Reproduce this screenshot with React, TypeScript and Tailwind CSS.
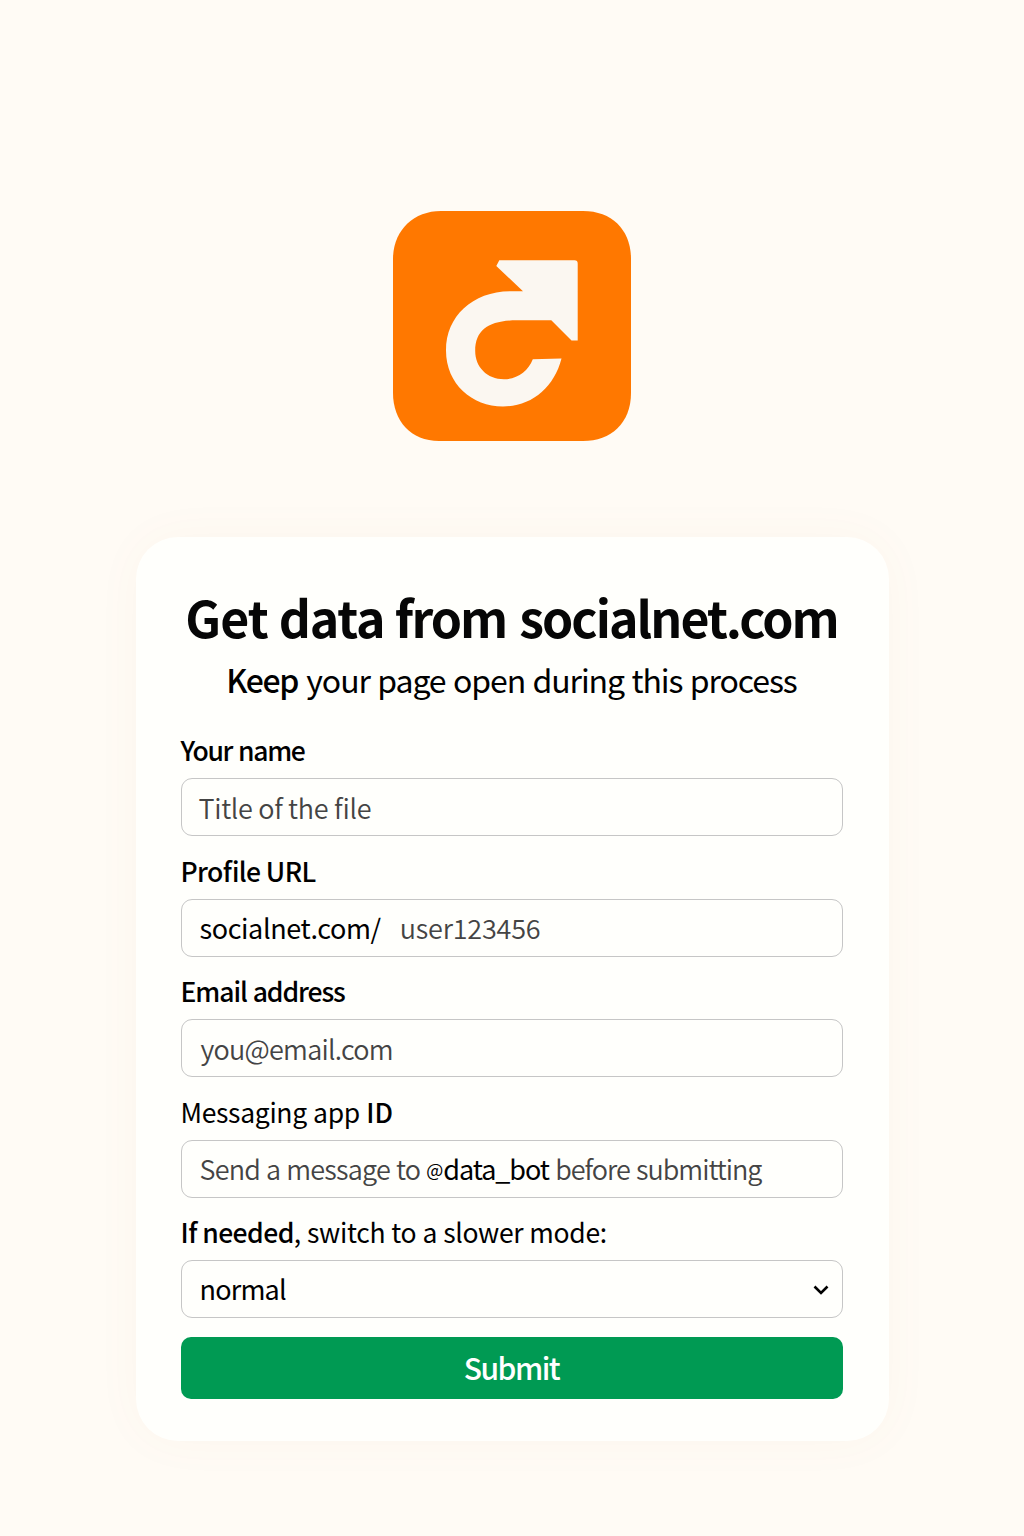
import type { ReactNode } from "react";

function Logo() {
  return (
    <svg width="238" height="230" viewBox="0 0 238 230" className="block" role="img" aria-label="Logo">
      <path
        d="M48 0H190C220 0 238 20 238 48V182C238 212 218 230 190 230H46C18 230 0 210 0 182V48C0 20 20 0 48 0Z"
        fill="#ff7800"
      />
      <path
        d="M106.300 49.300H181.500Q184.700 49.300 184.700 52.500V129.500H178.500L158.300 109.300H124C97 109.300 82.200 118 82.200 140C82.200 156 94 168.200 111 168.200C124 168.200 135 160.500 139.800 148.200L168.500 147.500C161 177 138 195.500 110 195.500C79 195.500 53 173 53 139.500C53 105 80 80.300 118 80.300H130L103.300 55Z"
        fill="#fbf7f1"
      />
    </svg>
  );
}

function Field({ label, children }: { label: ReactNode; children: ReactNode }) {
  return (
    <div className="flex h-[120.500px] flex-col">
      <div className="flex h-[62.500px] items-center whitespace-pre pt-[7.500px] text-[26.500px] leading-none text-black">
        {label}
      </div>
      <div className="flex h-[58px] items-center whitespace-pre rounded-[11px] border border-[#c6c6c6] pl-[18px] text-[27px] font-[350] leading-none text-[#444]">
        {children}
      </div>
    </div>
  );
}

export default function App() {
  return (
    <main className="flex h-[1536px] w-[1024px] flex-col items-center bg-[#fffbf5] pt-[211px] font-['Noto_Sans_CJK_SC',sans-serif] [font-feature-settings:'liga']">
      <Logo />
      <section className="mt-[96px] h-[904px] w-[753px] rounded-[42px] bg-[#fffffc] pl-[45px] pr-[46px] pt-[52px] shadow-[0_0_50px_rgba(170,120,60,0.035)]">
        <h1 className="flex h-[54px] items-center justify-center whitespace-pre text-[50px] font-bold leading-none text-[#060606]">
          <span className="tracking-[-0.800px]">Get </span>
          <span className="tracking-[-1.100px]">data </span>
          <span className="tracking-[-1.950px] [word-spacing:3.500px]">from socialnet.com</span>
        </h1>
        <p className="flex h-[72.500px] items-center justify-center whitespace-pre text-[32px] leading-none text-black">
          <span className="font-medium tracking-[-1.400px]">Keep</span>
          <span className="ml-px tracking-[-1.080px] [word-spacing:1.300px]"> your page open during this process</span>
        </p>
        <Field label={<span className="font-medium tracking-[-1.350px] [word-spacing:1.500px]">Your name</span>}>
          <span className="-ml-px tracking-[-0.320px]">Title of the file</span>
        </Field>
        <Field label={<span className="font-medium tracking-[-0.600px]">Profile URL</span>}>
          <span className="font-normal tracking-[-0.400px] text-black">socialnet.com/</span>
          <span className="ml-[19px] tracking-[-0.200px]">user123456</span>
        </Field>
        <Field label={<span className="font-medium tracking-[-1.080px] [word-spacing:1px]">Email address</span>}>
          <span className="ml-px tracking-[-0.750px]">you@email.com</span>
        </Field>
        <Field
          label={
            <>
              <span className="tracking-[-0.330px] [word-spacing:0.700px]">Messaging app </span>
              <span className="font-medium">ID</span>
            </>
          }
        >
          <span className="tracking-[-0.780px] [word-spacing:0.700px]">Send a message to </span>
          <span className="pt-[1px] text-[18px] font-normal text-black">@</span>
          <span className="font-normal tracking-[-1.050px] text-black">data_bot</span>
          <span className="tracking-[-1.020px] [word-spacing:1.300px]"> before submitting</span>
        </Field>
        <Field
          label={
            <>
              <span className="font-medium tracking-[-0.550px]">If needed</span>
              <span className="tracking-[-0.320px] [word-spacing:0.500px]">, switch to a slower mode:</span>
            </>
          }
        >
          <span className="pb-[2px] font-normal tracking-[-0.800px] text-black">normal</span>
          <svg width="18" height="12" viewBox="0 0 18 12" className="ml-auto mr-[12px] mt-[2px]" fill="none">
            <path d="M2.500 2.500L9 9L15.500 2.500" stroke="#000" strokeWidth="2.600" />
          </svg>
        </Field>
        <button className="mt-[18.500px] flex h-[62px] w-full items-center justify-center rounded-[10px] bg-[#009a53] pb-[2px] text-[30px] font-medium leading-none text-white">
          <span className="tracking-[-1.500px]">Submit</span>
        </button>
      </section>
    </main>
  );
}
